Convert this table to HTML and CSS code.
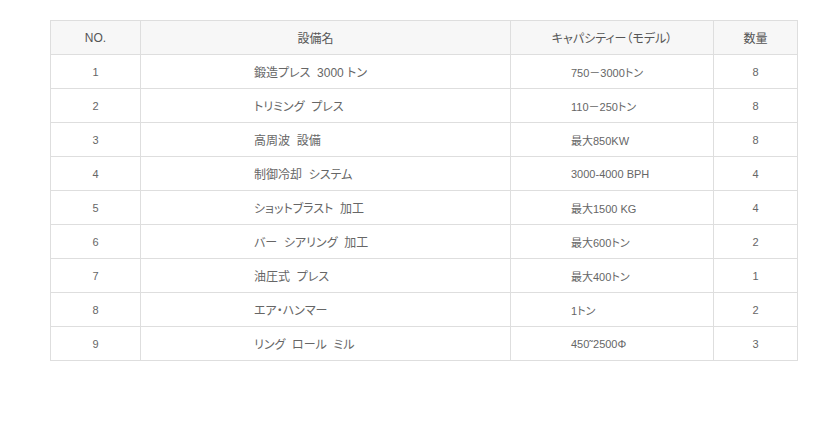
FILE: index.html
```html
<!DOCTYPE html>
<html lang="ja">
<head>
<meta charset="utf-8">
<title>設備一覧</title>
<link rel="stylesheet" href="styles.css">
</head>
<body>
<div class="wrap">
<table class="equip">
<colgroup>
<col class="c-no"><col class="c-name"><col class="c-cap"><col class="c-qty">
</colgroup>
<thead>
<tr><th>NO.</th><th class="h-name">設備名</th><th>キャパシティー（モデル）</th><th>数量</th></tr>
</thead>
<tbody>
<tr><td>1</td><td class="name">鍛造プレス&nbsp; 3000 トン</td><td class="cap">750－3000トン</td><td>8</td></tr>
<tr><td>2</td><td class="name">トリミング&nbsp; プレス</td><td class="cap">110－250トン</td><td>8</td></tr>
<tr><td>3</td><td class="name">高周波&nbsp; 設備</td><td class="cap">最大850KW</td><td>8</td></tr>
<tr><td>4</td><td class="name">制御冷却&nbsp; システム</td><td class="cap">3000-4000 BPH</td><td>4</td></tr>
<tr><td>5</td><td class="name">ショットブラスト&nbsp; 加工</td><td class="cap">最大1500 KG</td><td>4</td></tr>
<tr><td>6</td><td class="name">バー&nbsp; シアリング&nbsp; 加工</td><td class="cap">最大600トン</td><td>2</td></tr>
<tr><td>7</td><td class="name">油圧式&nbsp; プレス</td><td class="cap">最大400トン</td><td>1</td></tr>
<tr><td>8</td><td class="name">エア・ハンマー</td><td class="cap">1トン</td><td>2</td></tr>
<tr><td>9</td><td class="name">リング&nbsp; ロール&nbsp; ミル</td><td class="cap">450˜2500Φ</td><td>3</td></tr>
</tbody>
</table>
</div>
</body>
</html>
```
FILE: styles.css
```css
html, body {
  margin: 0;
  padding: 0;
  background: #fff;
}
body {
  font-family: "Liberation Sans", "Noto Sans CJK JP", sans-serif;
  font-feature-settings: "palt";
  color: #666;
}
.wrap {
  padding: 20px 0 0 50px;
}
.equip {
  width: 747px;
  table-layout: fixed;
  border-collapse: collapse;
  font-size: 11px;
}
.c-no { width: 90px; }
.c-name { width: 370px; }
.c-cap { width: 203px; }
.c-qty { width: 84px; }
.equip th,
.equip td {
  border: 1px solid #dedede;
  height: 34px;
  padding: 0;
  box-sizing: border-box;
  text-align: center;
  vertical-align: middle;
  white-space: nowrap;
}
.equip th {
  background: #f7f7f7;
  font-weight: normal;
  font-size: 12px;
  color: #555;
}
.equip th.h-name {
  padding-right: 20px;
}
.equip td.name {
  text-align: left;
  padding-left: 113px;
  font-size: 12px;
}
.equip td.cap {
  text-align: left;
  padding-left: 60px;
}
```
